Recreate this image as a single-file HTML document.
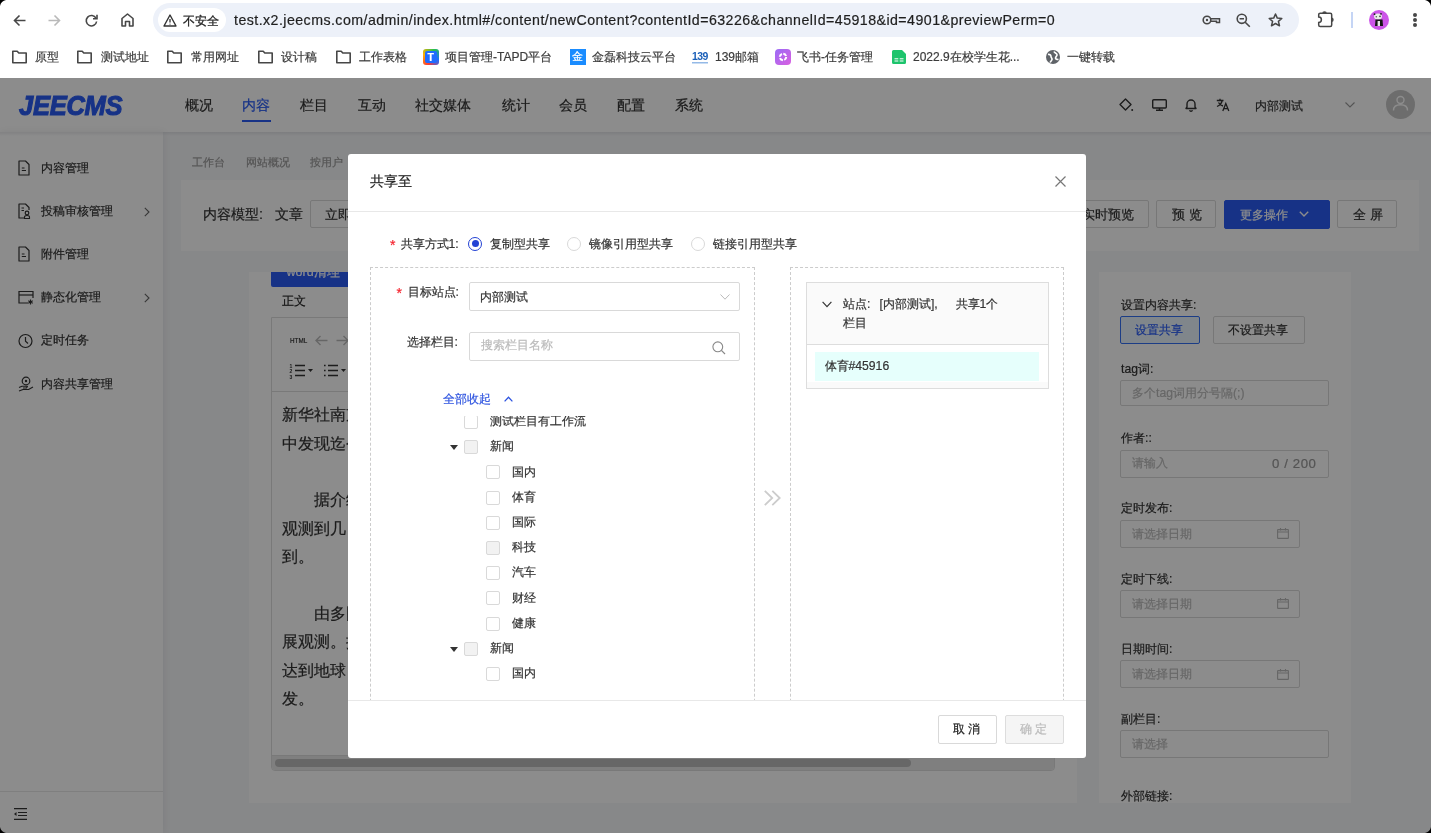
<!DOCTYPE html>
<html><head><meta charset="utf-8">
<style>
*{box-sizing:border-box;margin:0;padding:0}
html,body{width:1431px;height:833px;overflow:hidden}
body{position:relative;font-family:"Liberation Sans",sans-serif;background:#fff;color:#333}
.a{position:absolute}
.t{position:absolute;white-space:nowrap;line-height:1;-webkit-text-stroke:0.2px currentColor}
svg{position:absolute;overflow:visible}
/* chrome */
#chrome{will-change:transform;left:0;top:0;width:1431px;height:78px;background:#fff}
.bm{font-size:12px;color:#3c3c3c}
/* page */
#page{will-change:transform;left:0;top:78px;width:1431px;height:755px;overflow:hidden;background:#f6f7f9}
.nav{font-size:14.4px;color:#333;top:21px}
.side{font-size:12.2px;color:#333}
.btn{position:absolute;border:1px solid #d9d9d9;background:#fff;border-radius:2px;font-size:12.2px;color:#333;text-align:center}
.inp{position:absolute;border:1px solid #d9d9d9;background:#fff;border-radius:2px}
.lbl{font-size:12.2px;color:#333}
.ph{font-size:12.2px;color:#bbb}
.mask{left:0;top:78px;width:1431px;height:755px;background:rgba(0,0,0,.45)}
/* modal */
#modal{will-change:transform;left:348px;top:154px;width:738px;height:604px;background:#fff;border-radius:3px;overflow:hidden}
.ml{font-size:12.2px;color:#333}
.cb{position:absolute;width:14px;height:14px;border:1px solid #d9d9d9;border-radius:2px;background:#fff}
.cb.g{background:#f2f2f2}
.ml,.side,.lbl,.t.s12{margin-top:-1.4px}
.ph{margin-top:0}
.tri{position:absolute;width:0;height:0;border-left:4px solid transparent;border-right:4px solid transparent;border-top:5px solid #333}
</style></head><body>

<div id="chrome" class="a">
<svg style="left:13px;top:14px" width="13" height="13" viewBox="0 0 13 13"><path d="M12.5 6.5H1.5M6.5 1.5L1.5 6.5L6.5 11.5" fill="none" stroke="#474747" stroke-width="1.6"/></svg>
<svg style="left:48px;top:14px" width="13" height="13" viewBox="0 0 13 13"><path d="M0.5 6.5H11.5M6.5 1.5L11.5 6.5L6.5 11.5" fill="none" stroke="#b9b9b9" stroke-width="1.6"/></svg>
<svg style="left:85px;top:14px" width="13" height="13" viewBox="0 0 13 13"><path d="M11 4.2A5.2 5.2 0 1 0 11.6 7.5" fill="none" stroke="#474747" stroke-width="1.6"/><path d="M12 0.8V4.8H8" fill="none" stroke="#474747" stroke-width="1.6"/></svg>
<svg style="left:121px;top:13px" width="13" height="14" viewBox="0 0 13 14"><path d="M1 13V5.5L6.5 1L12 5.5V13H8.5V8.5H4.5V13Z" fill="none" stroke="#474747" stroke-width="1.6" stroke-linejoin="round"/></svg>
<div class="a" style="left:153px;top:3px;width:1146px;height:34px;border-radius:17px;background:#edf1f9"></div>
<div class="a" style="left:158px;top:8px;width:68px;height:24px;border-radius:12px;background:#fff"></div>
<svg style="left:163px;top:14px" width="14" height="13" viewBox="0 0 14 13"><path d="M7 1L13 12H1Z" fill="none" stroke="#333" stroke-width="1.4" stroke-linejoin="round"/><path d="M7 5V8.5M7 9.8V10.6" stroke="#333" stroke-width="1.3"/></svg>
<div class="t" style="left:183px;top:15px;font-size:11.6px;color:#1f1f1f;-webkit-text-stroke:0.3px #1f1f1f">不安全</div>
<div class="t" style="left:234px;top:13px;font-size:14.2px;letter-spacing:0.45px;color:#1f1f1f">test.x2.jeecms.com/admin/index.html#/content/newContent?contentId=63226&amp;channelId=45918&amp;id=4901&amp;previewPerm=0</div>
<svg style="left:1202px;top:14px" width="19" height="12" viewBox="0 0 19 12"><circle cx="5" cy="6" r="3.8" fill="none" stroke="#474747" stroke-width="1.6"/><circle cx="5" cy="6" r="1.2" fill="#474747"/><path d="M8.8 4.8H17.5V8.5H14.5V7.2H8.8" fill="none" stroke="#474747" stroke-width="1.5"/></svg>
<svg style="left:1236px;top:13px" width="15" height="15" viewBox="0 0 15 15"><circle cx="5.8" cy="5.8" r="4.6" fill="none" stroke="#474747" stroke-width="1.6"/><path d="M3.6 5.8H8M9.2 9.2L13.8 13.8" stroke="#474747" stroke-width="1.6"/></svg>
<svg style="left:1268px;top:13px" width="15" height="14" viewBox="0 0 15 14"><path d="M7.5 1L9.3 5.1L13.8 5.5L10.4 8.4L11.5 12.8L7.5 10.5L3.5 12.8L4.6 8.4L1.2 5.5L5.7 5.1Z" fill="none" stroke="#474747" stroke-width="1.5" stroke-linejoin="round"/></svg>
<svg style="left:1318px;top:11px" width="17" height="17" viewBox="0 0 17 17"><path d="M2.2 2.2H12.2A1.5 1.5 0 0 1 13.7 3.7V13.9A1.5 1.5 0 0 1 12.2 15.4H2.2A1.5 1.5 0 0 1 0.7 13.9V11.5A2.7 2.7 0 0 0 0.7 6.1V3.7A1.5 1.5 0 0 1 2.2 2.2Z" fill="none" stroke="#474747" stroke-width="1.5"/><path d="M4.2 2.6A2.3 2.3 0 0 1 8.8 2.6Z" fill="#474747"/><path d="M13.4 6.5A2.3 2.3 0 0 1 13.4 11.1Z" fill="#474747"/></svg>
<div class="a" style="left:1351px;top:12px;width:2px;height:16px;background:#c5d5f5"></div>
<svg style="left:1369px;top:10px" width="20" height="20" viewBox="0 0 20 20"><circle cx="10" cy="10" r="10" fill="#cc55e8"/><path d="M6.2 20.5V8" stroke="none"/><ellipse cx="9" cy="6.5" rx="4" ry="3" fill="#e8efe8"/><circle cx="5.5" cy="4.2" r="0.9" fill="#222"/><circle cx="12" cy="3.8" r="0.9" fill="#222"/><circle cx="7.3" cy="6.7" r="0.8" fill="#555"/><circle cx="11" cy="6.4" r="0.8" fill="#333"/><path d="M6.5 9.5H13.5L14 16H6Z" fill="#151515"/><rect x="8.6" y="11" width="2.4" height="5" fill="#e8e8e8"/></svg>
<div class="a" style="left:1413px;top:13px;width:4px;height:4px;border-radius:50%;background:#474747"></div>
<div class="a" style="left:1413px;top:18px;width:4px;height:4px;border-radius:50%;background:#474747"></div>
<div class="a" style="left:1413px;top:23px;width:4px;height:4px;border-radius:50%;background:#474747"></div>
<svg style="left:11px;top:50px" width="17" height="14" viewBox="0 0 17 14"><path d="M1.8 1.2H6.2L7.8 3H15.2V12.8H1.8Z" fill="none" stroke="#474747" stroke-width="1.6" stroke-linejoin="round"/></svg>
<div class="t bm" style="left:35px;top:51px">原型</div>
<svg style="left:76px;top:50px" width="17" height="14" viewBox="0 0 17 14"><path d="M1.8 1.2H6.2L7.8 3H15.2V12.8H1.8Z" fill="none" stroke="#474747" stroke-width="1.6" stroke-linejoin="round"/></svg>
<div class="t bm" style="left:101px;top:51px">测试地址</div>
<svg style="left:166px;top:50px" width="17" height="14" viewBox="0 0 17 14"><path d="M1.8 1.2H6.2L7.8 3H15.2V12.8H1.8Z" fill="none" stroke="#474747" stroke-width="1.6" stroke-linejoin="round"/></svg>
<div class="t bm" style="left:191px;top:51px">常用网址</div>
<svg style="left:257px;top:50px" width="17" height="14" viewBox="0 0 17 14"><path d="M1.8 1.2H6.2L7.8 3H15.2V12.8H1.8Z" fill="none" stroke="#474747" stroke-width="1.6" stroke-linejoin="round"/></svg>
<div class="t bm" style="left:281px;top:51px">设计稿</div>
<svg style="left:335px;top:50px" width="17" height="14" viewBox="0 0 17 14"><path d="M1.8 1.2H6.2L7.8 3H15.2V12.8H1.8Z" fill="none" stroke="#474747" stroke-width="1.6" stroke-linejoin="round"/></svg>
<div class="t bm" style="left:359px;top:51px">工作表格</div>
<div class="a" style="left:423px;top:49px;width:16px;height:16px;border-radius:3px;background:conic-gradient(from 200deg,#ff3b30,#ffb000,#27c24c,#1e6cff,#ff3b30)"></div><div class="a" style="left:425px;top:51px;width:12px;height:12px;background:#1f6bff;border-radius:2px"></div><div class="t" style="left:427.5px;top:52px;font-size:10.5px;font-weight:bold;color:#fff">T</div>
<div class="t bm" style="left:445px;top:51px">项目管理-TAPD平台</div>
<div class="a" style="left:570px;top:49px;width:16px;height:16px;background:#1a8cff"></div><div class="t" style="left:572px;top:51px;font-size:11px;color:#fff">金</div>
<div class="t bm" style="left:592px;top:51px">金磊科技云平台</div>
<div class="t" style="left:692px;top:52px;font-size:10px;font-weight:bold;color:#1a5fb8;letter-spacing:-0.6px;transform:scaleX(1.05);transform-origin:left;-webkit-text-stroke:0">139</div><div class="a" style="left:692px;top:62px;width:16px;height:2px;background:linear-gradient(#7aa8e0,#e3eefa)"></div>
<div class="t bm" style="left:715px;top:51px">139邮箱</div>
<div class="a" style="left:775px;top:49px;width:16px;height:16px;border-radius:4px;background:linear-gradient(135deg,#9a6cf6,#d95fe0)"></div><svg style="left:778px;top:52px" width="10" height="10" viewBox="0 0 10 10"><circle cx="5" cy="5" r="3.2" fill="none" stroke="#fff" stroke-width="2" stroke-dasharray="3.6 1.4"/></svg>
<div class="t bm" style="left:797px;top:51px">飞书-任务管理</div>
<svg style="left:892px;top:50px" width="14" height="14" viewBox="0 0 14 14"><path d="M1.5 0H10L14 4V12.5A1.5 1.5 0 0 1 12.5 14H1.5A1.5 1.5 0 0 1 0 12.5V1.5A1.5 1.5 0 0 1 1.5 0Z" fill="#1dc46c"/><path d="M2.5 8.8H6.3M7.7 8.8H11.5M2.5 11H6.3M7.7 11H11.5" stroke="#fff" stroke-width="1"/></svg>
<div class="t bm" style="left:913px;top:51px">2022.9在校学生花...</div>
<svg style="left:1046px;top:50px" width="14" height="14" viewBox="0 0 14 14"><circle cx="7" cy="7" r="7" fill="#5f6368"/><path d="M2 4.5C3.5 4 5 5 5 6.5S6.5 8 6 9.5 4.5 11.5 4 12.5M8 1.5C8.5 3 10.5 3 11 4.5S9.5 6.5 9.5 8 11.5 9.5 12.5 9.5" fill="none" stroke="#fff" stroke-width="1.6"/></svg>
<div class="t bm" style="left:1067px;top:51px">一键转载</div>
</div>

<div id="page" class="a">
<div class="a" style="left:0;top:0;width:1431px;height:54px;background:#fff"></div>
<div class="t" style="left:19px;top:14.5px;font-size:27px;font-weight:bold;font-style:italic;color:#2a5cf5;letter-spacing:-0.3px;-webkit-text-stroke:1.1px #2a5cf5;transform:scaleX(0.945);transform-origin:left">JEECMS</div>
<div class="t nav" style="left:184.5px;top:19.599999999999994px;color:#333">概况</div>
<div class="t nav" style="left:242px;top:19.599999999999994px;color:#2a5cf5">内容</div>
<div class="t nav" style="left:300px;top:19.599999999999994px;color:#333">栏目</div>
<div class="t nav" style="left:357.5px;top:19.599999999999994px;color:#333">互动</div>
<div class="t nav" style="left:415px;top:19.599999999999994px;color:#333">社交媒体</div>
<div class="t nav" style="left:501.5px;top:19.599999999999994px;color:#333">统计</div>
<div class="t nav" style="left:559px;top:19.599999999999994px;color:#333">会员</div>
<div class="t nav" style="left:616.5px;top:19.599999999999994px;color:#333">配置</div>
<div class="t nav" style="left:674.5px;top:19.599999999999994px;color:#333">系统</div>
<div class="a" style="left:242px;top:41.5px;width:29px;height:2.5px;background:#2a5cf5"></div>
<svg style="left:1119px;top:20px" width="15" height="14" viewBox="0 0 15 14"><path d="M6.5 1L12 6.5L6.5 12L1 6.5Z" fill="none" stroke="#333" stroke-width="1.4" stroke-linejoin="round"/><circle cx="13.2" cy="12" r="1" fill="#333"/></svg>
<svg style="left:1152px;top:21px" width="15" height="12" viewBox="0 0 15 12"><rect x="0.7" y="0.7" width="13.6" height="8.3" rx="1" fill="none" stroke="#333" stroke-width="1.4"/><path d="M7.5 9V11.3M4 11.3H11" stroke="#333" stroke-width="1.4"/></svg>
<svg style="left:1184px;top:20px" width="14" height="14" viewBox="0 0 14 14"><path d="M2 10.5H12L11 9V6A4 4 0 0 0 3 6V9Z" fill="none" stroke="#333" stroke-width="1.4" stroke-linejoin="round"/><path d="M5.5 12.2A1.6 1.6 0 0 0 8.5 12.2" fill="none" stroke="#333" stroke-width="1.3"/></svg>
<svg style="left:1216px;top:20px" width="14" height="14" viewBox="0 0 14 14"><path d="M0.8 2.5H7.5M4 0.8V2.5M6.3 2.5C5.5 5.5 3.5 7.5 1 8.5M2.5 4.5C3.5 6.5 5 7.5 7 8" fill="none" stroke="#333" stroke-width="1.3"/><path d="M6.8 13L9.8 5.5L12.8 13M7.8 10.7H11.8" fill="none" stroke="#333" stroke-width="1.3"/></svg>
<div class="t nav s12" style="left:1254.5px;top:23px;font-size:12.2px">内部测试</div>
<svg style="left:1345px;top:24px" width="10" height="6" viewBox="0 0 10 6"><path d="M0.5 0.5L5 5L9.5 0.5" fill="none" stroke="#999" stroke-width="1.1"/></svg>
<div class="a" style="left:1386px;top:11.5px;width:29px;height:29px;border-radius:50%;background:#c7c7c7"></div>
<svg style="left:1392px;top:17px" width="17" height="17" viewBox="0 0 17 17"><circle cx="8.5" cy="5" r="3.5" fill="none" stroke="#fff" stroke-width="1.4"/><path d="M1.5 15.5C1.5 11.5 4.5 9.8 8.5 9.8S15.5 11.5 15.5 15.5" fill="none" stroke="#fff" stroke-width="1.4"/></svg>
<div class="a" style="left:0;top:54px;width:163px;height:701px;background:#fff;box-shadow:1px 0 7px rgba(0,10,40,0.07)"></div>
<div class="a" style="left:0;top:54px;width:1431px;height:4px;background:linear-gradient(rgba(0,10,40,0.08),rgba(0,10,40,0))"></div>
<div class="t side" style="left:41px;top:85.0px;">内容管理</div>
<div class="t side" style="left:41px;top:128.2px;">投稿审核管理</div>
<svg style="left:144px;top:128.5px" width="6" height="10" viewBox="0 0 6 10"><path d="M0.8 0.8L5 5L0.8 9.2" fill="none" stroke="#666" stroke-width="1.1"/></svg>
<div class="t side" style="left:41px;top:171.4px;">附件管理</div>
<div class="t side" style="left:41px;top:214.60000000000002px;">静态化管理</div>
<svg style="left:144px;top:215px" width="6" height="10" viewBox="0 0 6 10"><path d="M0.8 0.8L5 5L0.8 9.2" fill="none" stroke="#666" stroke-width="1.1"/></svg>
<div class="t side" style="left:41px;top:257.8px;">定时任务</div>
<div class="t side" style="left:41px;top:301.0px;">内容共享管理</div>
<svg style="left:18px;top:82.0px" width="16" height="16" viewBox="0 0 16 16"><path d="M1 1H7.5L11 4.5V15H1Z" fill="none" stroke="#333" stroke-width="1.2" stroke-linejoin="round"/><path d="M3.8 8H6.5M3.8 10.5H8" stroke="#333" stroke-width="1.2"/></svg>
<svg style="left:18px;top:125.19999999999999px" width="16" height="16" viewBox="0 0 16 16"><path d="M6 15H1V1H7.5L11 4.5V7" fill="none" stroke="#333" stroke-width="1.2" stroke-linejoin="round"/><path d="M3.5 5H6M3.5 7.5H6" stroke="#333" stroke-width="1.2"/><circle cx="9" cy="10" r="1.8" fill="none" stroke="#333" stroke-width="1.2"/><path d="M6.5 15.5V14A2.5 1.5 0 0 1 11.5 14V15.5Z" fill="none" stroke="#333" stroke-width="1.1"/></svg>
<svg style="left:18px;top:168.4px" width="16" height="16" viewBox="0 0 16 16"><path d="M1 1H7.5L11 4.5V15H1Z" fill="none" stroke="#333" stroke-width="1.2" stroke-linejoin="round"/><path d="M3.8 8H6.5M3.8 10.5H8" stroke="#333" stroke-width="1.2"/></svg>
<svg style="left:18px;top:211.60000000000002px" width="16" height="16" viewBox="0 0 16 16"><path d="M10 13H1V1.5H15V8" fill="none" stroke="#333" stroke-width="1.2"/><path d="M1 5H15" stroke="#333" stroke-width="1.2"/><path d="M12.5 9.5V14.5M10.3 10.8L14.7 13.2M14.7 10.8L10.3 13.2" stroke="#333" stroke-width="1.1"/></svg>
<svg style="left:18px;top:254.8px" width="16" height="16" viewBox="0 0 16 16"><circle cx="7.5" cy="8" r="6.5" fill="none" stroke="#333" stroke-width="1.2"/><path d="M7.5 4V8.3L10 10.5" fill="none" stroke="#333" stroke-width="1.2"/></svg>
<svg style="left:18px;top:298.0px" width="16" height="16" viewBox="0 0 16 16"><circle cx="8" cy="5" r="3.8" fill="none" stroke="#333" stroke-width="1.2"/><circle cx="8" cy="5" r="1.2" fill="#333"/><path d="M1 11.5L4 10.3H9.5L8.5 12H5M1 15L5 13.5H10.5L15 11" fill="none" stroke="#333" stroke-width="1.1" stroke-linejoin="round"/></svg>
<div class="a" style="left:0;top:713px;width:163px;height:1px;background:#e8e8e8"></div>
<svg style="left:14px;top:730px" width="13" height="12" viewBox="0 0 13 12"><path d="M0 0.6H13M4 4.5H13M4 7.5H13M0 11.4H13" stroke="#333" stroke-width="1.2"/><path d="M0 6L2.5 4V8Z" fill="#333"/></svg>
<div class="t " style="left:192px;top:79px;font-size:10.8px;color:#999">工作台</div>
<div class="t " style="left:245.5px;top:79px;font-size:10.8px;color:#999">网站概况</div>
<div class="t " style="left:310px;top:79px;font-size:10.8px;color:#999">按用户</div>
<div class="a" style="left:181px;top:102px;width:1238px;height:71px;background:#fff"></div>
<div class="t " style="left:203px;top:129px;font-size:14.4px;color:#333">内容模型:</div><div class="t " style="left:275px;top:129px;font-size:14.4px;color:#333">文章</div>
<div class="btn" style="left:310px;top:122px;width:70px;height:28px"></div>
<div class="t s12" style="left:325px;top:132px;font-size:12.6px;color:#333">立即发布</div>
<div class="btn" style="left:1066px;top:122px;width:83px;height:28px"></div>
<div class="t s12" style="left:1082px;top:132px;font-size:12.6px;color:#333">实时预览</div>
<div class="btn" style="left:1156px;top:122px;width:60px;height:28px"></div>
<div class="t s12" style="left:1172px;top:132px;font-size:12.6px;letter-spacing:0.3px;color:#333">预 览</div>
<div class="btn" style="left:1224px;top:122px;width:106px;height:29px;background:#2a5cf5;border-color:#2a5cf5"></div>
<div class="t s12" style="left:1239.5px;top:132px;font-size:12.3px;color:#fff">更多操作</div>
<svg style="left:1299px;top:133px" width="10" height="6" viewBox="0 0 10 6"><path d="M0.8 0.8L5 5L9.2 0.8" fill="none" stroke="#fff" stroke-width="1.4"/></svg>
<div class="btn" style="left:1337px;top:122px;width:60px;height:28px"></div>
<div class="t s12" style="left:1352.5px;top:132px;font-size:12.6px;letter-spacing:0.5px;color:#333">全 屏</div>
<div class="a" style="left:249px;top:194px;width:828px;height:531px;background:#fff"></div>
<div class="a" style="left:271px;top:184px;width:120px;height:25px;background:#2a5cf5;border-radius:2px"></div>
<div class="t" style="left:286.5px;top:188px;font-size:12.6px;color:#fff">word清理</div>
<div class="a" style="left:249px;top:184px;width:828px;height:10px;background:#f6f7f9"></div>
<div class="t s12" style="left:282px;top:218px;font-size:12.2px;color:#222;-webkit-text-stroke:0.2px #222">正文</div>
<div class="a" style="left:271px;top:238.5px;width:784px;height:454px;border:1px solid #ddd;border-radius:0 0 4px 4px"></div>
<div class="a" style="left:272px;top:313px;width:782px;height:1px;background:#ddd"></div>
<div class="a" style="left:272px;top:677px;width:782px;height:14.5px;background:#e8e8e8;border-top:1px solid #ddd;border-radius:0 0 3px 3px"></div>
<div class="t " style="left:289.5px;top:259px;font-size:7px;color:#333;transform:scaleX(0.9);transform-origin:left">HTML</div>
<svg style="left:315px;top:257px" width="13" height="11" viewBox="0 0 13 11"><path d="M12.5 5.5H1.5M5.5 1L1 5.5L5.5 10" fill="none" stroke="#bbb" stroke-width="1.4"/></svg>
<svg style="left:336px;top:257px" width="13" height="11" viewBox="0 0 13 11"><path d="M0.5 5.5H11.5M7.5 1L12 5.5L7.5 10" fill="none" stroke="#bbb" stroke-width="1.4"/></svg>
<svg style="left:289px;top:285px" width="26" height="16" viewBox="0 0 26 16"><path d="M6 2.5H16M6 7.5H16M6 12.5H16" stroke="#333" stroke-width="1.6"/><path d="M19 6H24L21.5 9Z" fill="#333"/><text x="0.5" y="5" font-size="5" font-family="Liberation Sans" font-weight="bold" fill="#333">1</text><text x="0.5" y="10" font-size="5" font-family="Liberation Sans" font-weight="bold" fill="#333">2</text><text x="0.5" y="15.5" font-size="5" font-family="Liberation Sans" font-weight="bold" fill="#333">3</text></svg>
<svg style="left:323px;top:285px" width="26" height="16" viewBox="0 0 26 16"><path d="M5 2.5H15M5 7.5H15M5 12.5H15" stroke="#333" stroke-width="1.6"/><path d="M1 2.5H2.6M1 7.5H2.6M1 12.5H2.6" stroke="#333" stroke-width="1.6"/><path d="M18 6H23L20.5 9Z" fill="#333"/></svg>
<div class="t" style="left:282px;top:322.1px;font-size:16.2px;line-height:28.4px;color:#333">新华社南京电 记者从中国科学院紫金山天文台获悉，</div>
<div class="t" style="left:282px;top:350.51px;font-size:16.2px;line-height:28.4px;color:#333">中发现迄今为止最大的</div>
<div class="t" style="left:282px;top:407.33px;font-size:16.2px;line-height:28.4px;color:#333">　　据介绍，研究人员</div>
<div class="t" style="left:282px;top:435.74px;font-size:16.2px;line-height:28.4px;color:#333">观测到几</div>
<div class="t" style="left:282px;top:464.15px;font-size:16.2px;line-height:28.4px;color:#333">到。</div>
<div class="t" style="left:282px;top:520.97px;font-size:16.2px;line-height:28.4px;color:#333">　　由多国</div>
<div class="t" style="left:282px;top:549.38px;font-size:16.2px;line-height:28.4px;color:#333">展观测。据</div>
<div class="t" style="left:282px;top:577.79px;font-size:16.2px;line-height:28.4px;color:#333">达到地球，</div>
<div class="t" style="left:282px;top:606.2px;font-size:16.2px;line-height:28.4px;color:#333">发。</div>
<div class="a" style="left:275px;top:681px;width:636px;height:8px;border-radius:4px;background:#bcbcbc"></div>
<div class="a" style="left:1099px;top:194px;width:252px;height:531px;background:#fff"></div>
<div class="t lbl" style="left:1121px;top:222px;">设置内容共享:</div>
<div class="btn" style="left:1120px;top:238px;width:80px;height:28px;border-color:#3370f5;background:#e9f5fd"></div>
<div class="t lbl" style="left:1135px;top:247.5px;color:#2a5cf5">设置共享</div>
<div class="btn" style="left:1213px;top:238px;width:92px;height:28px"></div>
<div class="t lbl" style="left:1228px;top:247.5px;">不设置共享</div>
<div class="t lbl" style="left:1121px;top:286px;">tag词:</div>
<div class="inp" style="left:1120px;top:302px;width:209px;height:25.5px"></div>
<div class="t ph" style="left:1132px;top:309px;">多个tag词用分号隔(;)</div>
<div class="t lbl" style="left:1121px;top:355.5px;">作者::</div>
<div class="inp" style="left:1120px;top:371.5px;width:209px;height:28px"></div>
<div class="t ph" style="left:1132px;top:379px;">请输入</div>
<div class="t ph" style="left:1272px;top:378.5px;font-size:13.2px;letter-spacing:0.6px;color:#999">0 / 200</div>
<div class="t lbl" style="left:1121px;top:425.5px;">定时发布:</div>
<div class="inp" style="left:1120px;top:441.5px;width:180px;height:28px"></div>
<div class="t ph" style="left:1132px;top:449.5px;">请选择日期</div>
<svg style="left:1277px;top:450.0px" width="12" height="11" viewBox="0 0 12 11"><rect x="0.6" y="1.6" width="10.8" height="8.8" rx="0.5" fill="none" stroke="#bbb" stroke-width="1.1"/><path d="M0.6 4H11.4M3.5 0V2.5M8.5 0V2.5" stroke="#bbb" stroke-width="1.1"/></svg>
<div class="t lbl" style="left:1121px;top:496.5px;">定时下线:</div>
<div class="inp" style="left:1120px;top:511.5px;width:180px;height:28px"></div>
<div class="t ph" style="left:1132px;top:519.5px;">请选择日期</div>
<svg style="left:1277px;top:520.0px" width="12" height="11" viewBox="0 0 12 11"><rect x="0.6" y="1.6" width="10.8" height="8.8" rx="0.5" fill="none" stroke="#bbb" stroke-width="1.1"/><path d="M0.6 4H11.4M3.5 0V2.5M8.5 0V2.5" stroke="#bbb" stroke-width="1.1"/></svg>
<div class="t lbl" style="left:1121px;top:566.5px;">日期时间:</div>
<div class="inp" style="left:1120px;top:582px;width:180px;height:28px"></div>
<div class="t ph" style="left:1132px;top:590px;">请选择日期</div>
<svg style="left:1277px;top:590.5px" width="12" height="11" viewBox="0 0 12 11"><rect x="0.6" y="1.6" width="10.8" height="8.8" rx="0.5" fill="none" stroke="#bbb" stroke-width="1.1"/><path d="M0.6 4H11.4M3.5 0V2.5M8.5 0V2.5" stroke="#bbb" stroke-width="1.1"/></svg>
<div class="t lbl" style="left:1121px;top:636.5px;">副栏目:</div>
<div class="inp" style="left:1120px;top:652px;width:209px;height:28px"></div>
<div class="t ph" style="left:1132px;top:660px;">请选择</div>
<div class="t lbl" style="left:1121px;top:713.5px;">外部链接:</div>
</div>

<div class="a mask"></div>

<div id="modal" class="a">
<div class="t " style="left:22px;top:20px;font-size:14.4px;color:#222">共享至</div>
<svg style="left:706.5px;top:21.5px" width="11" height="11" viewBox="0 0 11 11"><path d="M0.5 0.5L10.5 10.5M10.5 0.5L0.5 10.5" stroke="#777" stroke-width="1.2"/></svg>
<div class="a" style="left:0px;top:57px;width:738px;height:1px;background:#e8e8e8"></div>
<div class="a" style="left:0;top:58px;width:738px;height:488px;overflow:hidden"><div class="t ml" style="left:42px;top:27px;color:#f5222d;font-size:14px;margin-top:-1.2px">*</div>
<div class="t ml" style="left:52.5px;top:27px;">共享方式1:</div>
<div class="a" style="left:120px;top:24.5px;width:14px;height:14px;border:1px solid #2342d4;border-radius:50%"></div>
<div class="a" style="left:123.5px;top:28px;width:7px;height:7px;background:#2342d4;border-radius:50%"></div>
<div class="t ml" style="left:142px;top:27px;">复制型共享</div>
<div class="a" style="left:219px;top:24.5px;width:14px;height:14px;border:1px solid #d9d9d9;border-radius:50%"></div>
<div class="t ml" style="left:241px;top:27px;">镜像引用型共享</div>
<div class="a" style="left:343px;top:24.5px;width:14px;height:14px;border:1px solid #d9d9d9;border-radius:50%"></div>
<div class="t ml" style="left:365px;top:27px;">链接引用型共享</div>
<div class="a" style="left:22px;top:55px;width:385px;height:500px;border:1px dashed #ccc"></div>
<div class="t ml" style="left:48.5px;top:75px;color:#f5222d;font-size:14px;margin-top:-1.2px">*</div>
<div class="t ml" style="left:59.5px;top:75px;">目标站点:</div>
<div class="a" style="left:121px;top:70px;width:271px;height:29px;border:1px solid #d9d9d9;border-radius:2px;background:#fff"></div>
<div class="t ml" style="left:132px;top:80px;">内部测试</div>
<svg style="left:372px;top:81.5px" width="10" height="6" viewBox="0 0 10 6"><path d="M0.5 0.5L5 5.2L9.5 0.5" fill="none" stroke="#bbb" stroke-width="1"/></svg>
<div class="t ml" style="left:58.5px;top:125.5px;">选择栏目:</div>
<div class="a" style="left:121px;top:120px;width:271px;height:29px;border:1px solid #d9d9d9;border-radius:2px;background:#fff"></div>
<div class="t ml" style="left:133px;top:128.5px;color:#bbb">搜索栏目名称</div>
<svg style="left:364px;top:129px" width="14" height="14" viewBox="0 0 14 14"><circle cx="5.8" cy="5.8" r="4.9" fill="none" stroke="#888" stroke-width="1.1"/><path d="M9.4 9.4L13 13" stroke="#888" stroke-width="1.2"/></svg>
<div class="t ml" style="left:95px;top:182.5px;color:#2f55e0">全部收起</div>
<svg style="left:156px;top:184px" width="9" height="6" viewBox="0 0 9 6"><path d="M0.6 5.4L4.5 1.2L8.4 5.4" fill="none" stroke="#2f55e0" stroke-width="1.3"/></svg>
<div class="a" style="left:22px;top:204px;width:384px;height:400px;overflow:hidden"><div class="cb" style="left:94px;top:-1.0px"></div><div class="t ml" style="left:119.5px;top:0.5px">测试栏目有工作流</div><div class="cb g" style="left:94px;top:24.2px"></div><div class="t ml" style="left:119.5px;top:25.7px">新闻</div><div class="tri" style="left:80px;top:29.2px"></div><div class="cb" style="left:116.3px;top:49.4px"></div><div class="t ml" style="left:141.6px;top:50.9px">国内</div><div class="cb" style="left:116.3px;top:74.6px"></div><div class="t ml" style="left:141.6px;top:76.1px">体育</div><div class="cb" style="left:116.3px;top:99.8px"></div><div class="t ml" style="left:141.6px;top:101.3px">国际</div><div class="cb g" style="left:116.3px;top:125.0px"></div><div class="t ml" style="left:141.6px;top:126.5px">科技</div><div class="cb" style="left:116.3px;top:150.2px"></div><div class="t ml" style="left:141.6px;top:151.7px">汽车</div><div class="cb" style="left:116.3px;top:175.4px"></div><div class="t ml" style="left:141.6px;top:176.9px">财经</div><div class="cb" style="left:116.3px;top:200.6px"></div><div class="t ml" style="left:141.6px;top:202.1px">健康</div><div class="cb g" style="left:94px;top:225.8px"></div><div class="t ml" style="left:119.5px;top:227.3px">新闻</div><div class="tri" style="left:80px;top:230.8px"></div><div class="cb" style="left:116.3px;top:251.0px"></div><div class="t ml" style="left:141.6px;top:252.5px">国内</div></div>
<svg style="left:416px;top:277.5px" width="18" height="16" viewBox="0 0 18 16"><path d="M0.8 0.8L8.2 8L0.8 15.2M8.3 0.8L15.7 8L8.3 15.2" fill="none" stroke="#ccc" stroke-width="1.8"/></svg>
<div class="a" style="left:442px;top:55px;width:274px;height:500px;border:1px dashed #ccc"></div>
<div class="a" style="left:457.5px;top:70px;width:243px;height:106.5px;border:1px solid #ddd;background:#fafafa"></div>
<div class="a" style="left:458.5px;top:132px;width:241px;height:1px;background:#ddd"></div>
<div class="a" style="left:458.5px;top:133px;width:241px;height:36.5px;background:#fff"></div>
<div class="a" style="left:467px;top:139.5px;width:224px;height:29.5px;background:#e6fffc"></div>
<svg style="left:473.5px;top:89px" width="10" height="7" viewBox="0 0 10 7"><path d="M0.6 0.8L5 5.6L9.4 0.8" fill="none" stroke="#333" stroke-width="1.2"/></svg>
<div class="t ml" style="left:495px;top:87px;">站点:</div><div class="t ml" style="left:531.5px;top:87px;">[内部测试],</div><div class="t ml" style="left:607.5px;top:87px;">共享1个</div>
<div class="t ml" style="left:495px;top:106.8px;">栏目</div>
<div class="t ml" style="left:476.5px;top:149.5px;">体育#45916</div></div>
<div class="a" style="left:0px;top:546px;width:738px;height:1px;background:#e8e8e8"></div>
<div class="btn" style="left:589.5px;top:561px;width:59.5px;height:28.5px;border-color:#d9d9d9"></div>
<div class="t ml" style="left:605px;top:570.5px;color:#222">取 消</div>
<div class="btn" style="left:656.5px;top:561px;width:59.5px;height:28.5px;border-color:#ddd;background:#f5f5f5"></div>
<div class="t ml" style="left:672px;top:570.5px;color:#bbb">确 定</div>
</div>

<svg style="left:0;top:0" width="6" height="6"><path d="M0 0H6C3 0.5 0.5 3 0 6Z" fill="#000"/></svg>
<svg style="left:1425px;top:0" width="6" height="6"><path d="M6 0H0C3 0.5 5.5 3 6 6Z" fill="#000"/></svg>
<svg style="left:0;top:827px" width="6" height="6"><path d="M0 6H6C3 5.5 0.5 3 0 0Z" fill="#000"/></svg>
<svg style="left:1425px;top:827px" width="6" height="6"><path d="M6 6H0C3 5.5 5.5 3 6 0Z" fill="#000"/></svg>
</body></html>
